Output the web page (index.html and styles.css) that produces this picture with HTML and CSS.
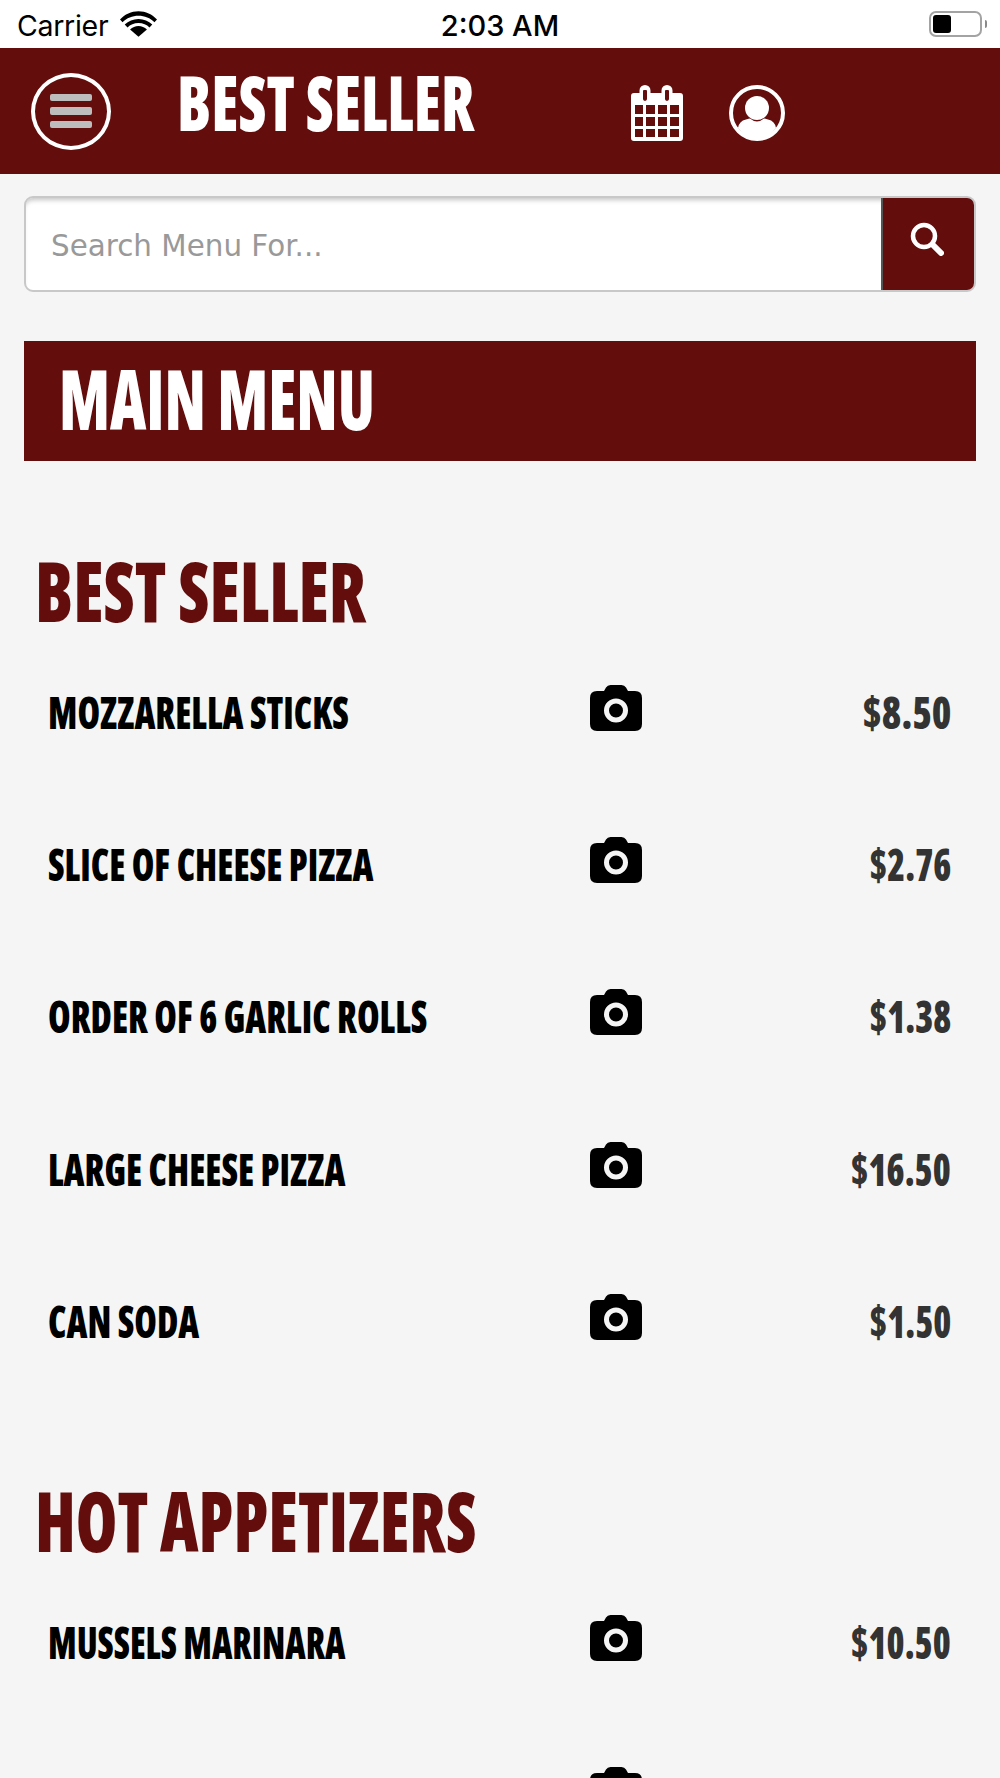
FILE: index.html
```html
<!DOCTYPE html>
<html lang="en">
<head>
<meta charset="utf-8">
<title>Best Seller</title>
<link rel="stylesheet" href="styles.css">
</head>
<body>
<svg class="defs" width="0" height="0" aria-hidden="true">
  <symbol id="camera" viewBox="0 0 52 46">
    <path fill-rule="evenodd" d="M7 6H14L16 2.500Q17.500 0 20.500 0H31.500Q34.500 0 36 2.500L38 6H45Q52 6 52 13V39Q52 46 45 46H7Q0 46 0 39V13Q0 6 7 6ZM26 13.500A12 12 0 1 0 26 37.500A12 12 0 1 0 26 13.500ZM26 18.500A7 7 0 1 1 26 32.500A7 7 0 1 1 26 18.500Z"/>
  </symbol>
</svg>
<div class="page">
  <div class="statusbar">
    <div class="status-left">
      <span class="carrier">Carrier</span>
      <svg class="wifi" viewBox="0 0 36 26"><path d="M18 5.500C24 5.500 29.500 7.800 33.500 11.800L36 9C31.300 4 25 1 18 1S4.700 4 0 9L2.500 11.800C6.500 7.800 12 5.500 18 5.500Z"/><path d="M18 12.500C22.300 12.500 26 14.200 28.700 16.800L31.400 14C27.800 10.500 23.200 8.500 18 8.500S8.200 10.500 4.600 14L7.300 16.800C10 14.200 13.700 12.500 18 12.500Z"/><path d="M18 15.500C15 15.500 12 16.700 9.800 18.800L18 26L26.200 18.800C24 16.700 21 15.500 18 15.500Z"/></svg>
    </div>
    <span class="clock">2:03 AM</span>
    <div class="battery"><span class="battery-shell"><span class="battery-level"></span></span><span class="battery-tip"></span></div>
  </div>
  <header class="topbar">
    <button class="menu-btn" aria-label="Menu"><i></i><i></i><i></i></button>
    <h1 class="topbar-title"><span class="cond">BEST SELLER</span></h1>
    <svg class="calendar" viewBox="0 0 52 56"><path fill="#fff" fill-rule="evenodd" d="M3 8H11V13A3 3 0 0 0 17 13V8H33V13A3 3 0 0 0 39 13V8H49Q52 8 52 11V53Q52 56 49 56H3Q0 56 0 53V11Q0 8 3 8ZM4 20V29H12V20ZM15 20V29H24V20ZM27 20V29H36V20ZM39 20V29H48V20ZM4 32V41H12V32ZM15 32V41H24V32ZM27 32V41H36V32ZM39 32V41H48V32ZM4 44V52H12V44ZM15 44V52H24V44ZM27 44V52H36V44ZM39 44V52H48V44Z"/><path fill="#fff" fill-rule="evenodd" d="M14 0A5.500 5.500 0 0 1 19.500 5.500V13A5.500 5.500 0 0 1 8.500 13V5.500A5.500 5.500 0 0 1 14 0ZM13 5A1 1 0 0 0 12 6V14A2 2 0 0 0 16 14V6A1 1 0 0 0 15 5Z"/><path fill="#fff" fill-rule="evenodd" d="M36 0A5.500 5.500 0 0 1 41.500 5.500V13A5.500 5.500 0 0 1 30.500 13V5.500A5.500 5.500 0 0 1 36 0ZM35 5A1 1 0 0 0 34 6V14A2 2 0 0 0 38 14V6A1 1 0 0 0 37 5Z"/></svg>
    <svg class="profile" viewBox="0 0 56 56"><circle cx="28" cy="28" r="26" fill="none" stroke="#fff" stroke-width="4"/><circle cx="28" cy="23" r="12" fill="#fff"/><path fill="#fff" d="M9 43Q10 36 17 34.500Q20 33.500 21 33.500Q24.500 36.500 28 36.500T35 33.500Q36 33.500 39 34.500Q46 36 47 43Q39 54 28 54T9 43Z"/></svg>
  </header>
  <main class="content">
    <form class="search">
      <div class="search-field">Search Menu For...</div>
      <div class="search-btn">
        <svg class="search-icon" viewBox="0 0 34 34"><circle cx="14" cy="14" r="11" fill="none" stroke="#fff" stroke-width="4.500"/><path d="M22.500 22.500L31 31" stroke="#fff" stroke-width="6" stroke-linecap="round"/></svg>
      </div>
    </form>
    <h2 class="banner"><span class="cond">MAIN MENU</span></h2>

    <section class="group">
      <h3 class="group-title"><span class="cond">BEST SELLER</span></h3>
      <div class="item"><span class="item-name"><span class="cond">MOZZARELLA STICKS</span></span><svg class="cam"><use href="#camera"/></svg><span class="price"><span class="cond-r cond-wide">$8.50</span></span></div>
      <div class="item"><span class="item-name"><span class="cond">SLICE OF CHEESE PIZZA</span></span><svg class="cam"><use href="#camera"/></svg><span class="price"><span class="cond-r">$2.76</span></span></div>
      <div class="item"><span class="item-name"><span class="cond">ORDER OF 6 GARLIC ROLLS</span></span><svg class="cam"><use href="#camera"/></svg><span class="price"><span class="cond-r">$1.38</span></span></div>
      <div class="item"><span class="item-name"><span class="cond">LARGE CHEESE PIZZA</span></span><svg class="cam"><use href="#camera"/></svg><span class="price"><span class="cond-r">$16.50</span></span></div>
      <div class="item"><span class="item-name"><span class="cond">CAN SODA</span></span><svg class="cam"><use href="#camera"/></svg><span class="price"><span class="cond-r">$1.50</span></span></div>
    </section>

    <section class="group group-next">
      <h3 class="group-title"><span class="cond">HOT APPETIZERS</span></h3>
      <div class="item"><span class="item-name"><span class="cond">MUSSELS MARINARA</span></span><svg class="cam"><use href="#camera"/></svg><span class="price"><span class="cond-r">$10.50</span></span></div>
      <div class="item"><span class="item-name"></span><svg class="cam"><use href="#camera"/></svg><span class="price"></span></div>
    </section>
  </main>
</div>
</body>
</html>
```

FILE: styles.css
```css
* { box-sizing: border-box; }
html, body { margin: 0; height: 100%; overflow: hidden; }
body { background: #f5f5f5; font-family: "Open Sans", "Liberation Sans", sans-serif; }
.defs { position: absolute; }
.page { height: 1778px; overflow: hidden; }

/* Heavy condensed display face, narrowed a little further */
.topbar-title, .banner, .group-title, .item-name, .price {
  font-family: "Open Sans", "Liberation Sans", sans-serif;
  font-weight: 800;
  font-stretch: 75%;
  white-space: nowrap;
}
.cond, .cond-r { display: inline-block; transform: scaleX(0.81); transform-origin: left center; }
.cond-r { transform-origin: right center; }
.cond-wide { transform: scaleX(0.88); }
.banner .cond { transform: scaleX(0.753); }
.group-title .cond { transform: scaleX(0.816); }
.group-next .group-title .cond { transform: scaleX(0.798); }
.group-next .item-name .cond { transform: scaleX(0.79); }

/* Status bar */
.statusbar { height: 48px; background: #fff; display: flex; align-items: center; justify-content: space-between; padding: 2px 13px 0 17px; position: relative; color: #000; }
.status-left { display: flex; align-items: center; gap: 12px; }
.carrier { font-family: Inter, sans-serif; font-size: 28.500px; letter-spacing: -0.3px; }
.wifi { width: 37px; height: 27px; margin-top: -3px; }
.clock { position: absolute; left: 0; right: 0; text-align: center; font-family: Inter, sans-serif; font-size: 29px; font-weight: 500; }
.battery { display: flex; align-items: center; gap: 3px; margin-top: -2px; }
.battery-shell { width: 53px; height: 26px; border: 2px solid #a3a3a3; border-radius: 7px; padding: 2px; display: block; }
.battery-level { display: block; width: 18px; height: 18px; background: #000; border-radius: 3px; }
.battery-tip { width: 2px; height: 8px; background: #8a8a8a; border-radius: 0 4px 4px 0; }

/* Top bar */
.topbar { height: 126px; background: #640d0d; display: flex; align-items: center; padding-left: 31px; }
.menu-btn { flex: none; width: 80px; height: 77px; border: 4.500px solid #fff; border-radius: 50%; background: none; padding: 0; display: flex; flex-direction: column; align-items: center; justify-content: center; gap: 6px; }
.menu-btn i { display: block; width: 42px; height: 7.500px; background: #bdbdbd; border-radius: 2px; }
.topbar-title { flex: none; width: 454px; margin: 0 0 19px 66px; color: #fff; font-size: 76px; line-height: 90px; }
.calendar { flex: none; width: 52px; height: 56px; margin-top: 4px; }
.profile { flex: none; width: 56px; height: 56px; margin: 4px 0 0 46px; }

.content { padding: 22px 24px 0; }

/* Search */
.search { display: flex; height: 96px; border: 2px solid #c8c8c8; border-radius: 9px; background: #fff; overflow: hidden; box-shadow: inset 0 5px 5px -3px #c4c4c4; }
.search-field { flex: 1; padding-left: 25px; line-height: 96px; font-family: "DejaVu Sans", Verdana, sans-serif; font-size: 29.400px; color: #999; }
.search-btn { flex: none; width: 93px; background: #640d0d; border-left: 2px solid #555; display: flex; align-items: center; justify-content: center; }
.search-icon { width: 34px; height: 34px; margin: 0 3px 10px 0; }

/* Page banner */
.banner { margin: 49px 0 0; height: 120px; background: #640d0d; color: #fff; padding-left: 35px; font-size: 84px; line-height: 113px; }

/* Menu groups */
.group-title { margin: 79px 0 45px 11px; color: #640d0d; font-size: 84px; line-height: 100px; }
.group-next .group-title { margin-top: 24px; }
.item { height: 152.200px; display: grid; grid-template-columns: 542px 52px 1fr; align-items: start; padding: 0 25px 0 24px; }
.item-name { font-size: 45px; color: #000; line-height: 54px; }
.cam { width: 52px; height: 46px; }
.price { text-align: right; font-size: 45px; color: #333; line-height: 54px; }
```
